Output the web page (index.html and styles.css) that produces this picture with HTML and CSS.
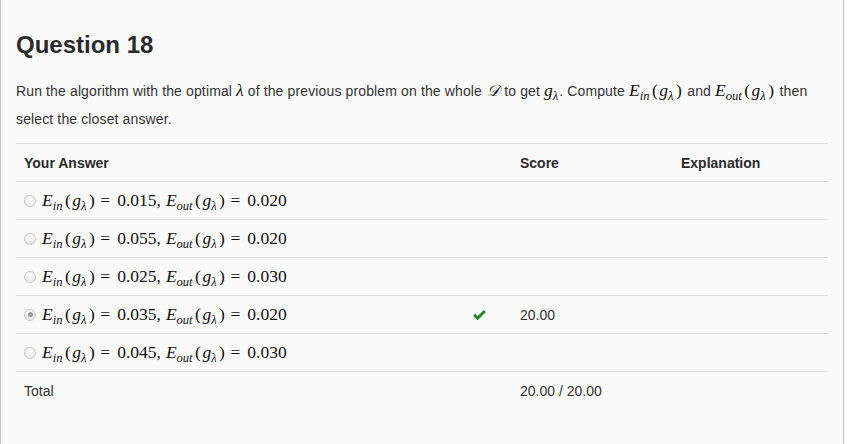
FILE: index.html
```html
<!DOCTYPE html>
<html>
<head>
<meta charset="utf-8">
<link rel="stylesheet" href="styles.css">
</head>
<body>
<div class="page">
  <h2 class="title">Question 18</h2>
  <p class="prompt">Run the algorithm with the optimal <span class="mi">λ</span> of the previous problem on the whole <span class="cal">𝒟</span> to get <span class="mexpr"><span class="mi">g</span><sub class="ms">λ</sub></span>. Compute <span class="mexpr"><span class="mi">E</span><sub class="ms">in</sub><span class="par">(</span><span class="mi">g</span><sub class="ms">λ</sub><span class="par">)</span></span> and <span class="mexpr"><span class="mi">E</span><sub class="ms">out</sub><span class="par">(</span><span class="mi">g</span><sub class="ms">λ</sub><span class="par">)</span></span> then select the closet answer.</p>
  <div class="table">
    <div class="row head">
      <div class="c-ans">Your Answer</div>
      <div class="c-mark"></div>
      <div class="c-score">Score</div>
      <div class="c-exp">Explanation</div>
    </div>
    <div class="row">
      <div class="c-ans"><span class="radio"></span><span class="math"><span class="mi">E</span><sub class="ms">in</sub><span class="par">(</span><span class="mi">g</span><sub class="ms">λ</sub><span class="par">)</span><span class="op">=</span>0.015<span class="cm">,</span><span class="mi">E</span><sub class="ms">out</sub><span class="par">(</span><span class="mi">g</span><sub class="ms">λ</sub><span class="par">)</span><span class="op">=</span>0.020</span></div>
      <div class="c-mark"></div><div class="c-score"></div><div class="c-exp"></div>
    </div>
    <div class="row">
      <div class="c-ans"><span class="radio"></span><span class="math"><span class="mi">E</span><sub class="ms">in</sub><span class="par">(</span><span class="mi">g</span><sub class="ms">λ</sub><span class="par">)</span><span class="op">=</span>0.055<span class="cm">,</span><span class="mi">E</span><sub class="ms">out</sub><span class="par">(</span><span class="mi">g</span><sub class="ms">λ</sub><span class="par">)</span><span class="op">=</span>0.020</span></div>
      <div class="c-mark"></div><div class="c-score"></div><div class="c-exp"></div>
    </div>
    <div class="row">
      <div class="c-ans"><span class="radio"></span><span class="math"><span class="mi">E</span><sub class="ms">in</sub><span class="par">(</span><span class="mi">g</span><sub class="ms">λ</sub><span class="par">)</span><span class="op">=</span>0.025<span class="cm">,</span><span class="mi">E</span><sub class="ms">out</sub><span class="par">(</span><span class="mi">g</span><sub class="ms">λ</sub><span class="par">)</span><span class="op">=</span>0.030</span></div>
      <div class="c-mark"></div><div class="c-score"></div><div class="c-exp"></div>
    </div>
    <div class="row">
      <div class="c-ans"><span class="radio checked"></span><span class="math"><span class="mi">E</span><sub class="ms">in</sub><span class="par">(</span><span class="mi">g</span><sub class="ms">λ</sub><span class="par">)</span><span class="op">=</span>0.035<span class="cm">,</span><span class="mi">E</span><sub class="ms">out</sub><span class="par">(</span><span class="mi">g</span><sub class="ms">λ</sub><span class="par">)</span><span class="op">=</span>0.020</span></div>
      <div class="c-mark"><svg width="13" height="11" viewBox="0 0 13 11"><path d="M1.2 5.8 L4.6 9.2 L11.8 2" fill="none" stroke="#1e8a1e" stroke-width="3" stroke-linejoin="miter"/></svg></div>
      <div class="c-score">20.00</div><div class="c-exp"></div>
    </div>
    <div class="row">
      <div class="c-ans"><span class="radio"></span><span class="math"><span class="mi">E</span><sub class="ms">in</sub><span class="par">(</span><span class="mi">g</span><sub class="ms">λ</sub><span class="par">)</span><span class="op">=</span>0.045<span class="cm">,</span><span class="mi">E</span><sub class="ms">out</sub><span class="par">(</span><span class="mi">g</span><sub class="ms">λ</sub><span class="par">)</span><span class="op">=</span>0.030</span></div>
      <div class="c-mark"></div><div class="c-score"></div><div class="c-exp"></div>
    </div>
    <div class="row total">
      <div class="c-ans">Total</div>
      <div class="c-mark"></div>
      <div class="c-score">20.00 / 20.00</div>
      <div class="c-exp"></div>
    </div>
  </div>
</div>
</body>
</html>
```

FILE: styles.css
```css
html, body {
  margin: 0;
  padding: 0;
  background: #ffffff;
}
.page {
  box-sizing: border-box;
  width: 844px;
  height: 444px;
  background: #fafafa;
  border-left: 1px solid #c8c8c8;
  border-right: 1px solid #c8c8c8;
  padding: 31px 15px 0 15px;
  font-family: "Liberation Sans", Arial, sans-serif;
  color: #333;
  font-size: 14px;
}
.title {
  margin: 0;
  font-size: 24px;
  font-weight: bold;
  line-height: 27px;
  color: #2a2a2a;
}
.prompt {
  margin: 18px 0 0 0;
  line-height: 28px;
  letter-spacing: 0.13px;
}
.mi {
  font-family: "Liberation Serif", "DejaVu Serif", serif;
  font-style: italic;
  font-size: 17.5px;
  letter-spacing: 0;
  color: #111;
}
.cal {
  font-family: "DejaVu Serif", serif;
  font-style: italic;
  font-size: 16px;
  margin-left: 1px;
  color: #111;
}
.ms {
  font-family: "Liberation Serif", serif;
  font-style: italic;
  font-size: 12.5px;
  vertical-align: -4px;
  line-height: 0;
  margin: 0 1px 0 0;
  letter-spacing: 0;
}
.par {
  margin: 0 1.5px;
}
.mexpr {
  font-family: "Liberation Serif", serif;
  font-size: 17.5px;
  color: #111;
  letter-spacing: 0;
}
.table {
  margin-top: 10px;
  border-top: 1px solid #ddd;
}
.row {
  display: flex;
  height: 37px;
  border-bottom: 1px solid #ddd;
  align-items: center;
}
.row.head {
  font-weight: bold;
  color: #2a2a2a;
}
.row.total {
  border-bottom: none;
}
.c-ans {
  box-sizing: border-box;
  width: 449px;
  padding-left: 8px;
  display: flex;
  align-items: center;
}
.c-mark {
  box-sizing: border-box;
  width: 47px;
  padding-left: 8px;
  display: flex;
  align-items: center;
}
.c-score {
  box-sizing: border-box;
  width: 161px;
  padding-left: 8px;
}
.c-exp {
  padding-left: 8px;
}
.radio {
  box-sizing: border-box;
  width: 12px;
  height: 12px;
  border-radius: 50%;
  border: 1px solid #c9c9c9;
  background: radial-gradient(circle at 50% 35%, #fbfbfb, #e4e4e4);
  margin-right: 6px;
  display: inline-flex;
  align-items: center;
  justify-content: center;
}
.radio.checked::after {
  content: "";
  width: 5px;
  height: 5px;
  border-radius: 50%;
  background: #9a9a9a;
}
.math {
  font-family: "Liberation Serif", "DejaVu Serif", serif;
  font-size: 17.5px;
  color: #111;
  white-space: nowrap;
}
.op {
  margin: 0 7px 0 4px;
}
.cm {
  margin-right: 5px;
}
```
